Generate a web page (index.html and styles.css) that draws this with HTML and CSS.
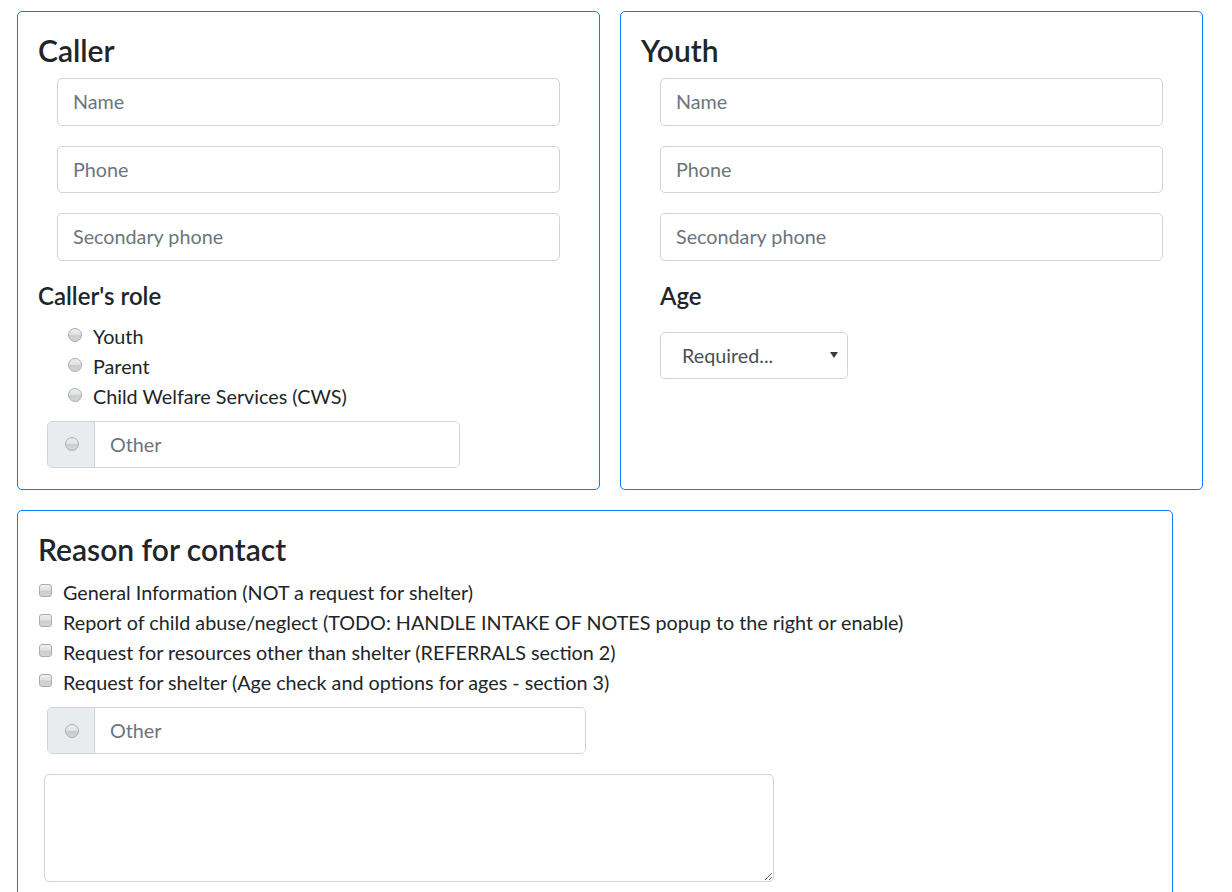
FILE: index.html
```html
<!DOCTYPE html>
<html lang="en">
<head>
<meta charset="utf-8">
<title>Intake</title>
<link rel="stylesheet" href="styles.css">
</head>
<body>
<div class="page">
  <div class="row-top">
    <section class="card">
      <h4 class="card-title">Caller</h4>
      <div class="fields">
        <input class="form-control" type="text" placeholder="Name">
        <input class="form-control" type="text" placeholder="Phone">
        <input class="form-control" type="text" placeholder="Secondary phone">
      </div>
      <h5 class="sub-title">Caller's role</h5>
      <div class="radio-list">
        <label class="check-row"><span class="radio"></span>Youth</label>
        <label class="check-row"><span class="radio"></span>Parent</label>
        <label class="check-row"><span class="radio"></span>Child Welfare Services (CWS)</label>
      </div>
      <div class="input-group role-other">
        <div class="addon"><span class="radio"></span></div>
        <input class="group-input" type="text" placeholder="Other">
      </div>
    </section>
    <section class="card">
      <h4 class="card-title">Youth</h4>
      <div class="fields">
        <input class="form-control" type="text" placeholder="Name">
        <input class="form-control" type="text" placeholder="Phone">
        <input class="form-control" type="text" placeholder="Secondary phone">
      </div>
      <h5 class="sub-title indented">Age</h5>
      <div class="select-wrap">
        <div class="custom-select">Required...</div>
        <span class="caret"></span>
      </div>
    </section>
  </div>
  <section class="card wide">
    <h4 class="card-title">Reason for contact</h4>
    <div class="check-list">
      <label class="check-row"><span class="checkbox"></span>General Information (NOT a request for shelter)</label>
      <label class="check-row"><span class="checkbox"></span>Report of child abuse/neglect (TODO: HANDLE INTAKE OF NOTES popup to the right or enable)</label>
      <label class="check-row"><span class="checkbox"></span>Request for resources other than shelter (REFERRALS section 2)</label>
      <label class="check-row"><span class="checkbox"></span>Request for shelter (Age check and options for ages - section 3)</label>
    </div>
    <div class="input-group reason-other">
      <div class="addon"><span class="radio"></span></div>
      <input class="group-input" type="text" placeholder="Other">
    </div>
    <textarea class="notes"></textarea>
  </section>
</div>
</body>
</html>
```

FILE: styles.css
```css
* { box-sizing: border-box; }
html, body { margin: 0; padding: 0; background: #fff; }
body {
  font-family: "Segoe UI", "Lato", "Liberation Sans", sans-serif;
  font-size: 19.75px;
  line-height: 1.5;
  color: #212529;
  overflow: hidden;
}
.page {
  padding: 11px 0 0 17px;
  width: 1232px;
  height: 892px;
}
.row-top {
  display: flex;
  gap: 20px;
  margin-bottom: 20px;
}
.card {
  width: 583px;
  height: 479px;
  border: 1px solid #0a7cff;
  border-radius: 5px;
  padding: 20px;
  display: flex;
  flex-direction: column;
  align-items: flex-start;
}
.card.wide {
  width: 1156px;
  height: 400px;
}
.card-title {
  margin: 0 0 10px 0;
  font-size: 30px;
  font-weight: 600;
  line-height: 36px;
}
.sub-title {
  margin: 0 0 11px 0;
  font-size: 24px;
  font-weight: 600;
  line-height: 30px;
}
.sub-title.indented { margin-left: 19px; margin-bottom: 12px; }
.fields {
  display: flex;
  flex-direction: column;
  gap: 20px;
  margin-left: 19px;
  margin-bottom: 20px;
}
.form-control {
  width: 503px;
  height: 47.5px;
  border: 1px solid #ced4da;
  border-radius: 5px;
  padding: 0 15px;
  font-family: inherit;
  font-size: 19.75px;
  color: #495057;
  background: #fff;
}
.form-control::placeholder, .group-input::placeholder { color: #6c757d; opacity: 1; }
.radio-list, .check-list {
  display: flex;
  flex-direction: column;
}
.radio-list { padding-left: 30px; margin-bottom: 9px; }
.check-list { margin-top: 1px; }
.check-row {
  display: flex;
  align-items: center;
  height: 30px;
  white-space: nowrap;
}
.radio {
  display: inline-block;
  width: 14px;
  height: 14px;
  border-radius: 50%;
  border: 1px solid #a9adb2;
  background: linear-gradient(#eceef0 0%, #dfe2e5 49%, #c9cdd1 51%, #d2d5d8 100%);
  margin-right: 11px;
  margin-top: -4px;
  flex: none;
}
.checkbox {
  display: inline-block;
  width: 13px;
  height: 13px;
  border-radius: 3px;
  border: 1px solid #a9adb2;
  background: linear-gradient(#eceef0 0%, #dfe2e5 49%, #c9cdd1 51%, #d2d5d8 100%);
  margin-left: 1px;
  margin-right: 11px;
  margin-top: -6px;
  flex: none;
}
.input-group {
  display: flex;
  height: 47px;
  border: 1px solid #ced4da;
  border-radius: 5px;
  overflow: hidden;
  margin-left: 9px;
}
.role-other { width: 413px; }
.reason-other { width: 539px; margin-top: 9px; }
.addon {
  width: 47px;
  flex: none;
  background: #e9ecef;
  border-right: 1px solid #ced4da;
  display: flex;
  align-items: center;
  justify-content: center;
}
.addon .radio { margin: 0 0 0 1px; }
.group-input {
  flex: 1;
  border: 0;
  padding: 0 15px;
  font-family: inherit;
  font-size: 19.75px;
  color: #495057;
  outline: none;
}
.select-wrap {
  position: relative;
  margin-left: 19px;
  margin-top: 9px;
}
.custom-select {
  width: 188px;
  height: 47px;
  border: 1px solid #ced4da;
  border-radius: 5px;
  padding: 0 0 0 21px;
  line-height: 45px;
  color: #495057;
}
.caret {
  position: absolute;
  right: 10px;
  top: 20px;
  width: 0;
  height: 0;
  border-left: 4px solid transparent;
  border-right: 4px solid transparent;
  border-top: 6px solid #343a40;
}
.notes {
  width: 730px;
  height: 108px;
  margin-top: 20px;
  margin-left: 6px;
  border: 1px solid #ced4da;
  border-radius: 5px;
  resize: both;
  font-family: inherit;
  font-size: 20px;
}
```
